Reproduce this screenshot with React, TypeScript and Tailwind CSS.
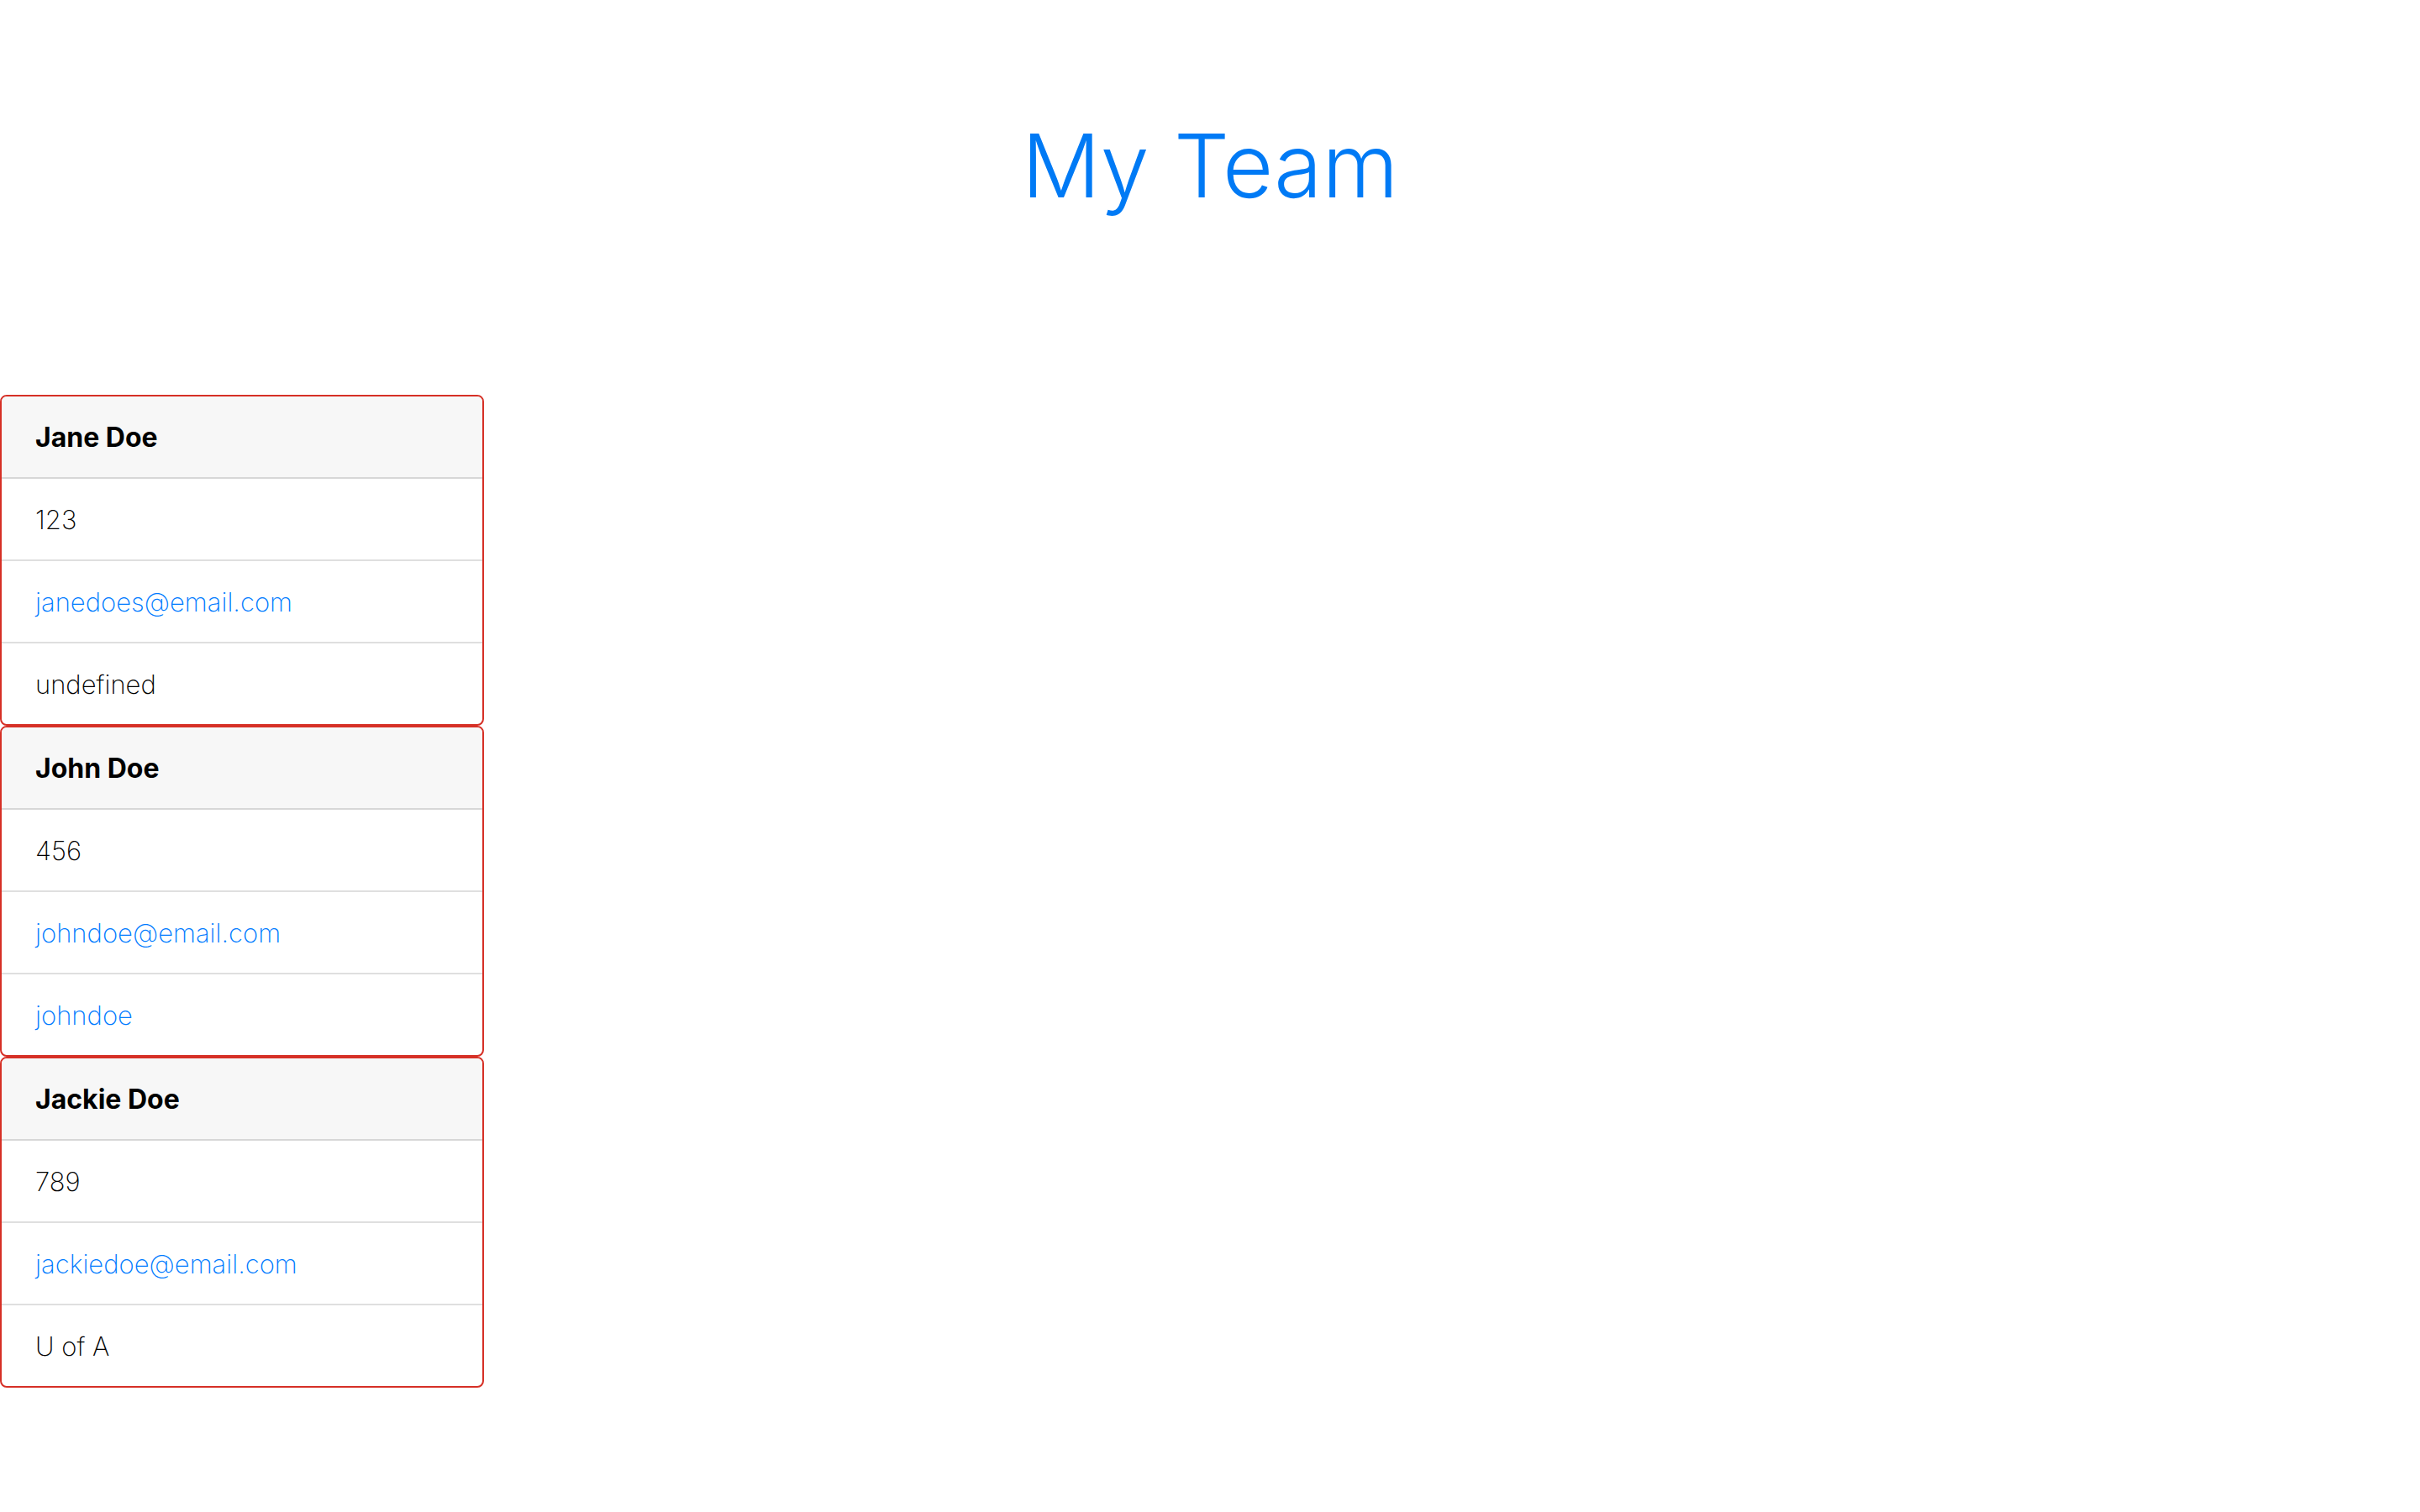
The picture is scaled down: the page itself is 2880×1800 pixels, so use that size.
type Row = { text: string; href?: string };
type Member = { name: string; rows: Row[] };

const team: Member[] = [
  { name: "Jane Doe", rows: [{ text: "123" }, { text: "janedoes@email.com", href: "mailto:janedoes@email.com" }, { text: "undefined" }] },
  { name: "John Doe", rows: [{ text: "456" }, { text: "johndoe@email.com", href: "mailto:johndoe@email.com" }, { text: "johndoe", href: "#johndoe" }] },
  { name: "Jackie Doe", rows: [{ text: "789" }, { text: "jackiedoe@email.com", href: "mailto:jackiedoe@email.com" }, { text: "U of A" }] },
];

function Card({ member }: { member: Member }) {
  return (
    <section className="overflow-hidden rounded-lg border-2 border-[#d63026] bg-white">
      <h2 className="border-b-2 border-[#d7d7d7] bg-[#f7f7f7] px-10 pt-[25px] pb-[23px] font-bold">{member.name}</h2>
      <ul className="divide-y-2 divide-[#dfdfdf] text-[31px] leading-12 font-extralight">
        {member.rows.map((row) => (
          <li key={row.text} className="px-10 pt-[25px] pb-[23px]">
            {row.href ? <a href={row.href} className="text-[#007bff]">{row.text}</a> : row.text}
          </li>
        ))}
      </ul>
    </section>
  );
}

export default function App() {
  return (
    <div className="bg-white font-['Inter',sans-serif] text-[32px] leading-12 text-black">
      <header className="px-8 pt-[130px] pb-[206px]">
        <h1 className="text-center text-[104px] leading-[134px] font-[350] text-[#007af5]">My Team</h1>
      </header>
      <main className="w-1/5">
        {team.map((member) => (
          <Card key={member.name} member={member} />
        ))}
      </main>
    </div>
  );
}
